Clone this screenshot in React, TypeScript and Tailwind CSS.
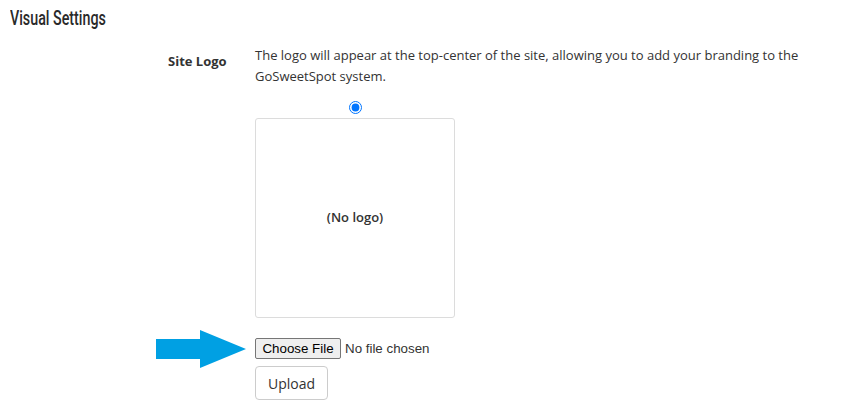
import React from "react";

export default function App() {
  return (
    <div className="w-[845px] h-[407px] bg-white overflow-hidden text-[#333]" style={{ fontFamily: '"Open Sans", sans-serif' }}>
      <h2 className="pl-[10px] pt-[5px] h-[31px]">
        <span
          className="inline-block origin-left scale-x-[0.68] text-[21px] leading-[26px] font-medium text-[#2a2a2a] whitespace-nowrap"
          style={{ fontFamily: 'Roboto, sans-serif' }}
        >
          Visual Settings
        </span>
      </h2>
      <div className="flex pl-[168px] pt-[14px]">
        <div className="w-[87px] pt-[7px] text-[13px] font-bold leading-[18px] text-[#333]">Site Logo</div>
        <div className="w-[560px]">
          <p className="text-[13px] leading-[21px] text-[#333]">
            The logo will appear at the top-center of the site, allowing you to add your branding to the GoSweetSpot system.
          </p>
          <div className="flex w-[200px] flex-col items-center pt-[14px]">
            <input type="radio" defaultChecked className="m-0 h-[13px] w-[13px] accent-[#0075ff]" />
          </div>
          <div className="mt-[4px] flex h-[200px] w-[200px] items-center justify-center rounded-[3px] border border-[#dcdcdc]">
            <span className="text-[13px] font-semibold text-[#333]">(No logo)</span>
          </div>
          <div className="relative mt-[20px] flex items-center">
            <svg
              className="absolute left-[-100px] top-[-8px]"
              width="92"
              height="40"
              viewBox="0 0 92 40"
            >
              <polygon points="1,9 45,9 45,0 91,19 45,38 45,29 1,29" fill="#00a0e3" />
            </svg>
            <span
              className="flex h-[21px] w-[86px] items-center justify-center rounded-[2px] border border-[#767676] bg-[#efefef] text-[13.33px] text-black"
              style={{ fontFamily: '"Liberation Sans", Arial, sans-serif' }}
            >
              Choose File
            </span>
            <span
              className="ml-[4px] text-[13.33px] text-[#333]"
              style={{ fontFamily: '"Liberation Sans", Arial, sans-serif' }}
            >
              No file chosen
            </span>
          </div>
          <button className="mt-[7px] flex h-[34px] w-[73px] items-center justify-center rounded-[4px] border border-[#ccc] bg-white text-[14px] text-[#333]">
            Upload
          </button>
        </div>
      </div>
    </div>
  );
}
